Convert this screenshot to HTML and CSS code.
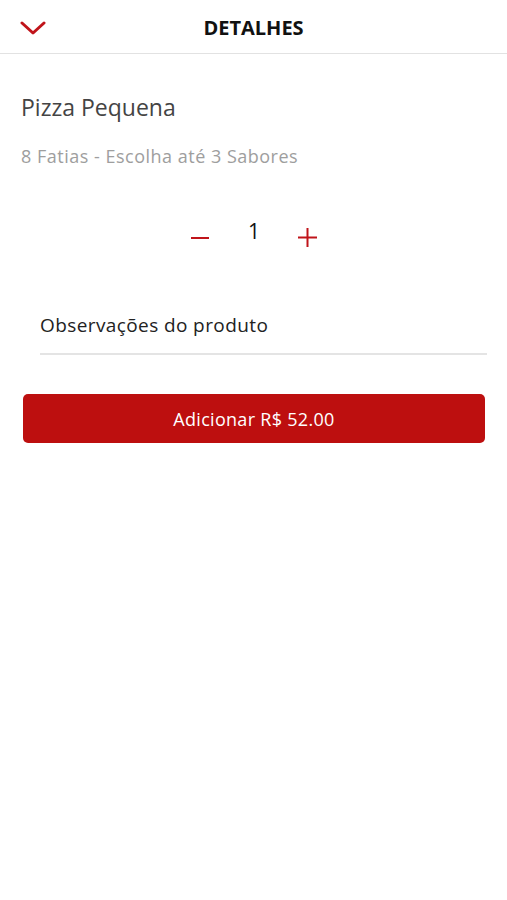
FILE: index.html
```html
<!DOCTYPE html>
<html lang="pt">
<head>
<meta charset="utf-8">
<title>Detalhes</title>
<link rel="stylesheet" href="styles.css">
</head>
<body>
<header class="topbar">
  <button class="back" aria-label="Voltar">
    <svg width="26" height="14" viewBox="0 0 26 14"><path d="M2 2 L13 12 L24 2" fill="none" stroke="#c0141a" stroke-width="3" stroke-linecap="round" stroke-linejoin="round"/></svg>
  </button>
  <h1 class="title">DETALHES</h1>
</header>
<main class="content">
  <h2 class="name">Pizza Pequena</h2>
  <p class="desc">8 Fatias - Escolha até 3 Sabores</p>
  <div class="qty">
    <span class="qbtn minus">
      <svg width="18" height="2" viewBox="0 0 18 2"><rect width="18" height="2" fill="#c0141a"/></svg>
    </span>
    <span class="qval">1</span>
    <span class="qbtn plus">
      <svg width="19" height="19" viewBox="0 0 19 19"><rect y="8.5" width="19" height="2" fill="#c0141a"/><rect x="8.5" width="2" height="19" fill="#c0141a"/></svg>
    </span>
  </div>
  <div class="obs">Observações do produto</div>
  <button class="add">Adicionar R$ 52.00</button>
</main>
</body>
</html>
```
FILE: styles.css
```css
html, body {
  margin: 0;
  padding: 0;
  background: #ffffff;
  font-family: "Open Sans", "Noto Sans", sans-serif;
}
.topbar {
  height: 53px;
  border-bottom: 1px solid #e2e2e2;
  display: flex;
  align-items: center;
  justify-content: center;
  position: relative;
}
.back {
  position: absolute;
  left: 20px;
  top: 21px;
  border: 0;
  background: none;
  padding: 0;
  width: 26px;
  height: 14px;
  display: block;
}
.back svg { display: block; }
.title {
  margin: 0;
  font-size: 20px;
  font-weight: 700;
  color: #111;
  letter-spacing: 0;
  padding-top: 2px;
}
.content {
  padding: 0 22px 0 21px;
}
.name {
  margin: 0;
  padding-top: 38px;
  font-size: 23px;
  font-weight: 400;
  color: #444;
  line-height: 30px;
}
.desc {
  margin: 23px 0 0;
  font-size: 18px;
  letter-spacing: 0.5px;
  color: #9e9e9e;
  line-height: 22px;
}
.qty {
  display: flex;
  justify-content: center;
  align-items: flex-start;
  margin-top: 53px;
  height: 30px;
}
.qbtn { display: block; }
.qbtn svg { display: block; }
.minus { margin-top: 17px; margin-left: 2px; }
.qval {
  font-size: 21px;
  color: #111;
  line-height: 22px;
  margin: 0 38px 0 39px;
}
.plus { margin-top: 8px; }
.obs {
  margin: 63px -2px 0 19px;
  font-size: 19px;
  letter-spacing: 0.4px;
  color: #222;
  line-height: 24px;
  padding-bottom: 16px;
  border-bottom: 2px solid #e4e4e4;
}
.add {
  display: block;
  width: 462px;
  height: 49px;
  margin: 39px 0 0 2px;
  border: 0;
  border-radius: 5px;
  background: #bd0f0f;
  color: #fff;
  font-family: "Open Sans", "Noto Sans", sans-serif;
  font-size: 18px;
  letter-spacing: 0.3px;
}
```
